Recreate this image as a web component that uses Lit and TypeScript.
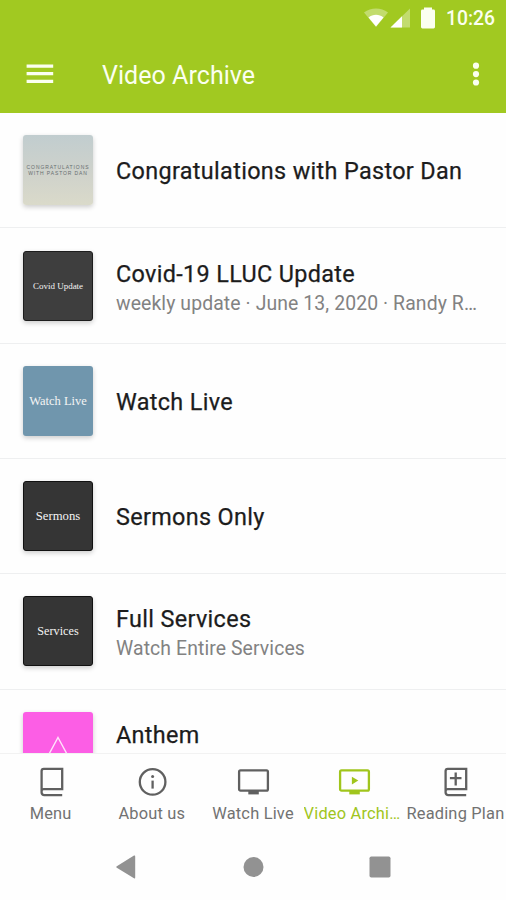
import { LitElement, html, css, svg, nothing } from "lit";
import { customElement } from "lit/decorators.js";
import { classMap } from "lit/directives/class-map.js";

interface Entry {
  title: string;
  sub?: string;
  cover: string;
  lines: string[];
}

const entries: Entry[] = [
  { title: "Congratulations with Pastor Dan", cover: "sky", lines: ["CONGRATULATIONS", "WITH PASTOR DAN"] },
  { title: "Covid-19 LLUC Update", sub: "weekly update · June 13, 2020 · Randy Roberts", cover: "slate", lines: ["Covid Update"] },
  { title: "Watch Live", cover: "blue", lines: ["Watch Live"] },
  { title: "Sermons Only", cover: "dark sermons", lines: ["Sermons"] },
  { title: "Full Services", sub: "Watch Entire Services", cover: "dark", lines: ["Services"] },
  { title: "Anthem", sub: "\u00a0", cover: "pink", lines: [] },
];

const book = svg`<path d="M28.200 30.100H10.200a2.600 2.600 0 0 1-2.600-2.600V6.100a2.200 2.200 0 0 1 2.200-2.200H28.200V24.200H9.600q-1.600 0-2 1.400"/>`;
const screen = svg`<rect x="3.100" y="5.300" width="28.800" height="20.300" rx="1.400"/><path class="solid" d="M12.300 25.500h10.500v3.900H12.300z"/>`;

const tabs = [
  { label: "Menu", icon: book },
  { label: "About us", icon: svg`<circle cx="17.600" cy="16.900" r="12.800"/><path d="M17.600 15.600v8"/><circle class="solid" cx="17.600" cy="11.400" r="1.500"/>` },
  { label: "Watch Live", icon: screen },
  { label: "Video Archive", active: true, icon: svg`${screen}<path class="solid" d="M14.900 11.700l6.400 3.900-6.400 3.900z"/>` },
  { label: "Reading Plan", icon: svg`${book}<path d="M17.700 7.400v13.200M11.900 13.200h11.600"/>` },
];

@customElement("app-root")
export class AppRoot extends LitElement {
  static styles = css`
    :host {
      display: flex;
      flex-direction: column;
      width: 506px;
      height: 900px;
      overflow: hidden;
      background: #fefefe;
      color: #1c1c1c;
      font-family: Roboto, "Liberation Sans", sans-serif;
    }
    * { box-sizing: border-box; }
    svg { display: block; flex: none; }
    .header { flex: none; height: 112.6px; background: #a1c921; color: #fbfff0; }
    .status { display: flex; align-items: center; justify-content: flex-end; height: 36px; padding-right: 11px; }
    .battery { margin-left: 4px; }
    .clock { margin-left: 7px; padding-top: 2px; font-size: 19.3px; font-weight: 500; line-height: 36px; }
    .bar { display: flex; align-items: center; height: 75px; padding: 0 21px 0 26px; }
    .heading { flex: 1; margin-left: 48px; padding-top: 3px; font-size: 25px; line-height: 75px; letter-spacing: 0.05px; }
    .list { flex: 1; min-height: 0; padding-top: 0.5px; overflow: hidden; }
    .row { display: flex; align-items: center; height: 115.3px; padding: 0 27px 0 23px; border-bottom: 1.4px solid #eeeff0; }
    .cover {
      display: flex; flex-direction: column; align-items: center; justify-content: center; flex: none;
      width: 70px; height: 70px; border-radius: 3px; overflow: hidden; white-space: nowrap;
      font-family: "Liberation Serif", serif; font-size: 12px; line-height: 14px; color: #f4f4f4;
      box-shadow: 0 2px 5px rgba(0, 0, 0, 0.2);
    }
    .sky {
      background: linear-gradient(#c1cdcf, #cfd2cb 55%, #dadaca); color: #676e70;
      font: 5px/6px "Liberation Sans", sans-serif; letter-spacing: 0.9px;
    }
    .slate { background: #3e3e3e; border: 1px solid #1d1d1d; font-size: 9px; }
    .blue { background: #7096ad; font-size: 12.5px; }
    .dark { background: #353535; border: 1px solid #111; font-size: 12.2px; }
    .sermons { font-size: 12.7px; }
    .pink { background: #fc5ee5; }
    .texts { flex: 1; min-width: 0; margin-left: 23px; padding-top: 3px; }
    .two-line { padding-top: 6px; }
    .title { font-size: 23.4px; line-height: 29px; letter-spacing: 0.34px; white-space: nowrap; -webkit-text-stroke: 0.25px currentColor; }
    .sub { overflow: hidden; text-overflow: ellipsis; white-space: nowrap; font-size: 19.4px; line-height: 29px; letter-spacing: 0.1px; color: #828282; }
    .tabs { display: flex; flex: none; height: 80px; border-top: 1.5px solid #f2f2f2; color: #606060; }
    .tab { display: flex; flex-direction: column; align-items: center; flex: 1; min-width: 0; padding-top: 11px; }
    .label { max-width: 100%; overflow: hidden; text-overflow: ellipsis; white-space: nowrap; font-size: 16.4px; line-height: 20px; margin-top: 5px; letter-spacing: 0.2px; color: #727272; }
    .active, .active .label { color: #a0c51c; }
    .line { fill: none; stroke: currentColor; stroke-width: 2.3; }
    .solid { fill: currentColor; stroke: none; }
    .system { display: flex; align-items: center; justify-content: space-between; flex: none; height: 67px; padding: 0 115px; color: #929292; }
  `;

  render() {
    return html`
      <header class="header">
        <div class="status">
          <svg width="26" height="20" viewBox="0 0 26 20">
            <path fill="#fff" opacity=".35" d="M1 4.600C7.800-.8 18.200-.8 25 4.600L13 19z" />
            <path fill="#fff" d="M5.500 9.400C9.800 6 16.200 6 20.500 9.400L13 18.600z" />
          </svg>
          <svg width="24" height="20" viewBox="0 0 24 20">
            <path fill="#fff" opacity=".35" d="M21 .5v19H1.500z" />
            <path fill="#fff" d="M13 8.300v11.200H1.500z" />
          </svg>
          <svg class="battery" width="22" height="22" viewBox="0 0 22 22">
            <path class="solid" d="M7 .6h8v2h1.600q1.400 0 1.400 1.400v16q0 1.400-1.400 1.400H5.400Q4 21.400 4 20V4q0-1.400 1.400-1.400H7z" />
          </svg>
          <span class="clock">10:26</span>
        </div>
        <div class="bar">
          <svg width="28" height="20" viewBox="0 0 28 20">
            <path fill="none" stroke="#fbfff0" stroke-width="3.200" d="M.6 2.100h26.600M.6 9.700h26.600M.6 17.300h26.600" />
          </svg>
          <span class="heading">Video Archive</span>
          <svg width="18" height="26" viewBox="0 0 18 26">
            <g class="solid"><circle cx="9" cy="4.700" r="3.100" /><circle cx="9" cy="13.100" r="3.100" /><circle cx="9" cy="21.500" r="3.100" /></g>
          </svg>
        </div>
      </header>
      <main class="list">
        ${entries.map(
          (e) => html`<div class="row">
            <div class="cover ${e.cover}">
              ${e.lines.length
                ? e.lines.map((l) => html`<span>${l}</span>`)
                : html`<svg width="70" height="70" viewBox="0 0 70 70"><path d="M35 25.500L48 49.500H22z" fill="none" stroke="#ffe4fb" stroke-width="1.400"/></svg>`}
            </div>
            <div class=${classMap({ texts: true, "two-line": !!e.sub })}>
              <div class="title">${e.title}</div>
              ${e.sub ? html`<div class="sub">${e.sub}</div>` : nothing}
            </div>
          </div>`
        )}
      </main>
      <nav class="tabs">
        ${tabs.map(
          (t) => html`<div class=${classMap({ tab: true, active: !!t.active })}>
            <svg class="line" width="34" height="34" viewBox="0 0 34 34">${t.icon}</svg>
            <span class="label">${t.label}</span>
          </div>`
        )}
      </nav>
      <footer class="system">
        <svg width="22" height="24" viewBox="0 0 22 24"><path class="solid" d="M1.800 11.200L19 .6q1.200-.6 1.200.8v21q0 1.400-1.200.8L1.800 12.800q-1.300-.8 0-1.600z" /></svg>
        <svg width="22" height="22" viewBox="0 0 22 22"><circle class="solid" cx="11.500" cy="11" r="10" /></svg>
        <svg width="22" height="22" viewBox="0 0 22 22"><rect class="solid" x=".5" y=".5" width="21" height="21" rx="1.800" /></svg>
      </footer>
    `;
  }
}
